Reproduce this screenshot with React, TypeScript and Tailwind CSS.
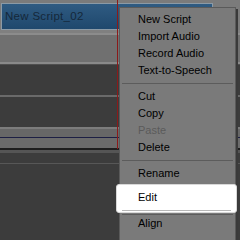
import React from 'react'

type Item = { label: string; disabled?: boolean; active?: boolean } | { sep: true }

const items: Item[] = [
  { label: 'New Script' },
  { label: 'Import Audio' },
  { label: 'Record Audio' },
  { label: 'Text-to-Speech' },
  { sep: true },
  { label: 'Cut' },
  { label: 'Copy' },
  { label: 'Paste', disabled: true },
  { label: 'Delete' },
  { sep: true },
  { label: 'Rename' },
  { label: 'Edit', active: true },
  { label: 'Align' },
]

function Track() {
  return (
    <div className="flex flex-col w-[240px]">
      <div className="h-[3px] bg-[#7b7b7b]" />
      {/* clip row */}
      <div className="h-[27px] flex bg-[#7b7b7b] pl-[1px]">
        <div className="w-[212px] h-[27px] border border-[#8b9aa6] bg-gradient-to-b from-[#2f5b82] to-[#1f486d] flex items-center pl-[3px]">
          <span className="text-[11.5px] leading-none text-[#15283a] tracking-[0.3px]">New Script_02</span>
        </div>
      </div>
      <div className="h-[3px] bg-[#808080]" />
      <div className="h-[2px] bg-[#8c8c8c]" />
      <div className="h-[27px] bg-[#707070]" />
      <div className="h-[2px] bg-[#8a8a8a]" />
      <div className="h-[1px] bg-[#505050]" />
      <div className="h-[30px] bg-[#3c3c3c]" />
      <div className="h-[2px] bg-[#6a6a6a]" />
      <div className="h-[30px] bg-[#3c3c3c]" />
      <div className="h-[2px] bg-[#7c7c7c]" />
      <div className="h-[8px] bg-[#676767]" />
      <div className="h-[1px] bg-[#1d1f44]" />
      <div className="h-[10px] bg-[#6b6b6b]" />
      <div className="h-[2px] bg-[#1e1e1e]" />
      <div className="h-[3px] bg-[#555555]" />
      <div className="h-[10px] bg-[#3c3c3c]" />
      <div className="h-[1px] bg-[#575757]" />
      <div className="h-[77px] bg-[#3c3c3c]" />
    </div>
  )
}

function Menu() {
  return (
    <div className="absolute left-[119px] top-[7px] w-[117px] h-[240px] bg-[#7a7a7a] border border-[#5a5a5a] shadow-[2px_2px_0_#3a3a3a] pt-[3px]">
      {items.map((it, i) => {
        if ('sep' in it)
          return (
            <div key={i} className="h-[9px] flex items-center px-[2px]">
              <div className="w-full h-[1px] bg-[#5c5c5c]" />
            </div>
          )
        if (it.active)
          return (
            <React.Fragment key={i}>
              <div className="relative -ml-[4px] -mr-[2px] mt-[2px] h-[29px] rounded-[3px] bg-white border border-[#d8d8d8] flex flex-col">
                <div className="flex-1 flex items-center pl-[21px] text-[11px] leading-none text-black">{it.label}</div>
                <div className="mx-[5px] mb-[1px] h-[1px] bg-[#b8b8b8]" />
              </div>
              <div className="mx-[2px] mt-[1px] h-[1px] bg-[#5c5c5c]" />
            </React.Fragment>
          )
        return (
          <div
            key={i}
            className={`h-[17px] flex items-center pl-[18px] text-[11px] leading-none ${
              it.disabled ? 'text-[#5a5a5a]' : 'text-black'
            }`}
          >
            {it.label}
          </div>
        )
      })}
    </div>
  )
}

export default function App() {
  return (
    <div className="relative w-[240px] h-[240px] overflow-hidden bg-[#3c3c3c] font-['Liberation_Sans',Arial,sans-serif]">
      <Track />
      {/* playhead */}
      <div className="absolute left-[117px] top-0 w-[1px] h-[149px] bg-[#8b1a1a]" />
      <Menu />
    </div>
  )
}
